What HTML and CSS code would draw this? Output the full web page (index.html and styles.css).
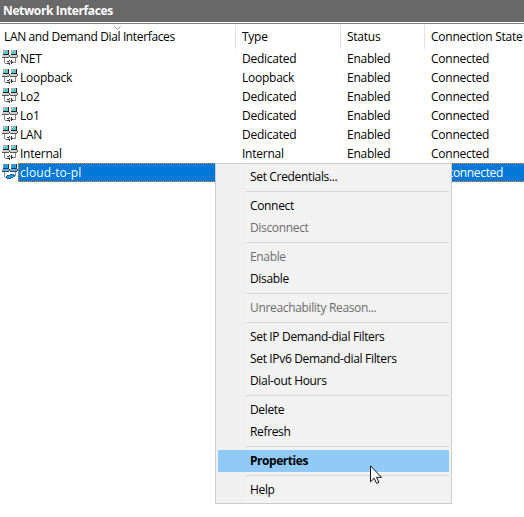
FILE: index.html
```html
<!DOCTYPE html>
<html lang="en">
<head>
<meta charset="utf-8">
<title>Network Interfaces</title>
<link rel="stylesheet" href="styles.css">
</head>
<body>
<svg width="0" height="0" class="defs">
  <symbol id="nic" viewBox="0 0 16 16" shape-rendering="crispEdges">
    <path fill="#a8a8a8" d="M1 0h5v4H1zM9 0h5v4H9z"/>
    <path fill="#222" d="M6 0h1v5H6zM14 0h1v5h-1zM1 4h5v1H1zM9 4h5v1H9z"/>
    <path fill="#28d8dc" d="M2 1h3v3H2zM10 1h3v3h-3z"/>
    <path fill="#d9ffff" d="M2 1h1v1H2zM10 1h1v1h-1z"/>
    <path fill="#d0d0d0" d="M0 5h7v2H0zM8 5h7v2H8z"/>
    <path fill="#555" d="M0 7h7v1H0zM8 7h7v1H8zM7 5h1v2H7zM15 5h1v2h-1z"/>
    <path fill="#888" d="M2 8h1v5H2zM13 8h1v5h-1zM3 13h3v1H3zM11 12h2v1h-2z"/>
    <path fill="#c4c4c4" d="M6 11h5v2H6z"/>
    <path fill="#333" d="M5 11h2v1H5zM7 10h1v1H7zM9 10h1v2H9zM9 12h2v1H9zM5 13h2v1H5zM7 13h1v2H7zM9 13h1v1H9z"/>
  </symbol>
  <symbol id="nic-selected" viewBox="0 0 16 16" shape-rendering="crispEdges">
    <path fill="#5797c9" d="M1 0h5v4H1zM9 0h5v4H9z"/>
    <path fill="#123f68" d="M6 0h1v5H6zM14 0h1v5h-1zM1 4h5v1H1zM9 4h5v1H9z"/>
    <path fill="#159fe0" d="M2 1h3v3H2zM10 1h3v3h-3z"/>
    <path fill="#79a9d0" d="M0 5h7v2H0zM8 5h7v2H8z"/>
    <path fill="#244d72" d="M0 7h7v1H0zM8 7h7v1H8zM7 5h1v2H7zM15 5h1v2h-1z"/>
    <path fill="#7395b2" d="M2 8h1v5H2zM13 8h1v4h-1zM3 13h2v1H3z"/>
    <path fill="#1c5c90" d="M5 11h3v-1h4v1h1v2h-2v1H9v1H5v-1H4v-2h1z"/>
    <path fill="#2d9be8" d="M5 12h3v-1h3v1h1v1H9v1H5z"/>
  </symbol>
</svg>
<main class="pane">
  <h1 class="title">Network Interfaces</h1>
  <div class="head row">
    <div class="name">LAN and Demand Dial Interfaces<svg class="sort" viewBox="0 0 7 4"><path d="M.5.5l3 3 3-3"/></svg></div>
    <div>Type</div><div>Status</div><div class="state">Connection State</div>
  </div>
  <div class="row"><div class="name"><svg class="icon"><use href="#nic"/></svg><span>NET</span></div><div>Dedicated</div><div>Enabled</div><div>Connected</div></div>
  <div class="row"><div class="name"><svg class="icon"><use href="#nic"/></svg><span>Loopback</span></div><div>Loopback</div><div>Enabled</div><div>Connected</div></div>
  <div class="row"><div class="name"><svg class="icon"><use href="#nic"/></svg><span>Lo2</span></div><div>Dedicated</div><div>Enabled</div><div>Connected</div></div>
  <div class="row"><div class="name"><svg class="icon"><use href="#nic"/></svg><span>Lo1</span></div><div>Dedicated</div><div>Enabled</div><div>Connected</div></div>
  <div class="row"><div class="name"><svg class="icon"><use href="#nic"/></svg><span>LAN</span></div><div>Dedicated</div><div>Enabled</div><div>Connected</div></div>
  <div class="row"><div class="name"><svg class="icon"><use href="#nic"/></svg><span>Internal</span></div><div>Internal</div><div>Enabled</div><div>Connected</div></div>
  <div class="row selected"><div class="name"><svg class="icon"><use href="#nic-selected"/></svg><span>cloud-to-pl</span></div><div></div><div></div><div class="result">Disconnected</div></div>
</main>
<div class="menu">
  <div class="item">Set Credentials...</div>
  <hr>
  <div class="item">Connect</div>
  <div class="item off">Disconnect</div>
  <hr>
  <div class="item off">Enable</div>
  <div class="item">Disable</div>
  <hr>
  <div class="item off">Unreachability Reason...</div>
  <hr>
  <div class="item">Set IP Demand-dial Filters</div>
  <div class="item">Set IPv6 Demand-dial Filters</div>
  <div class="item">Dial-out Hours</div>
  <hr>
  <div class="item">Delete</div>
  <div class="item">Refresh</div>
  <hr>
  <div class="item active">Properties</div>
  <hr>
  <div class="item">Help</div>
</div>
<svg class="cursor" viewBox="0 0 12 19"><path d="M.5.8v16l3.7-3.6 2.4 5.2 2.3-1-2.4-5.1h5z"/></svg>
</body>
</html>
```

FILE: styles.css
```css
* { box-sizing: border-box; }
body {
  margin: 0;
  height: 517px;
  overflow: hidden;
  position: relative;
  background: #fff;
  color: #000;
  font: 12px/19px "Open Sans", "Noto Sans", sans-serif;
  letter-spacing: -0.25px;
  white-space: nowrap;
}
.defs { position: absolute; }
.title {
  margin: 0 0 1px;
  height: 22px;
  padding-left: 3px;
  background: #696969;
  color: #fff;
  font-size: 12px;
  line-height: 22px;
  letter-spacing: -0.37px;
}
.row {
  display: grid;
  grid-template-columns: 236px 105px 84px 1fr;
  height: 19px;
}
.row > div { padding-left: 6px; }
.row > .name { display: flex; padding-left: 2px; }
.head {
  height: 26px;
  border-top: 1px solid #82828a;
  padding: 1px 0;
  line-height: 24px;
}
.head > div { border-right: 1px solid #e2e2e2; }
.head > .name { position: relative; padding-left: 4px; letter-spacing: -0.36px; }
.head > .state { border: 0; }
.sort {
  position: absolute;
  left: 114px;
  top: 1px;
  width: 7px;
  height: 4px;
  fill: none;
  stroke: #999;
}
.icon { width: 16px; height: 16px; margin-top: 1px; }
.name span { padding-left: 2px; }
.selected {
  background: linear-gradient(#0078d7, #0078d7) 18px 0 no-repeat;
  color: #fff;
  position: relative;
}
.selected .name span { letter-spacing: 0.1px; }
.selected .result { letter-spacing: -0.33px; }
.selected::after {
  content: "";
  position: absolute;
  inset: 0 0 0 18px;
  border: 1px dotted #ff8728;
  border-right: 0;
}
.menu {
  position: absolute;
  left: 215px;
  top: 163px;
  width: 237px;
  height: 341px;
  padding: 2px;
  border: 1px solid #ccc;
  background: linear-gradient(90deg, #f0f0f0 30px, #f2f2f2 30px);
  letter-spacing: -0.34px;
}
.item { height: 22px; padding-left: 32px; line-height: 22px; }
.off { color: #6d6d6d; }
.active { background: #91c9f7; font-weight: 700; letter-spacing: -0.45px; }
.menu hr {
  height: 1px;
  margin: 3px 0 3px 28px;
  border: 0;
  background: #d7d7d7;
}
.cursor {
  position: absolute;
  left: 370px;
  top: 465px;
  width: 12px;
  height: 19px;
  fill: #fff;
  stroke: #111;
}
```
